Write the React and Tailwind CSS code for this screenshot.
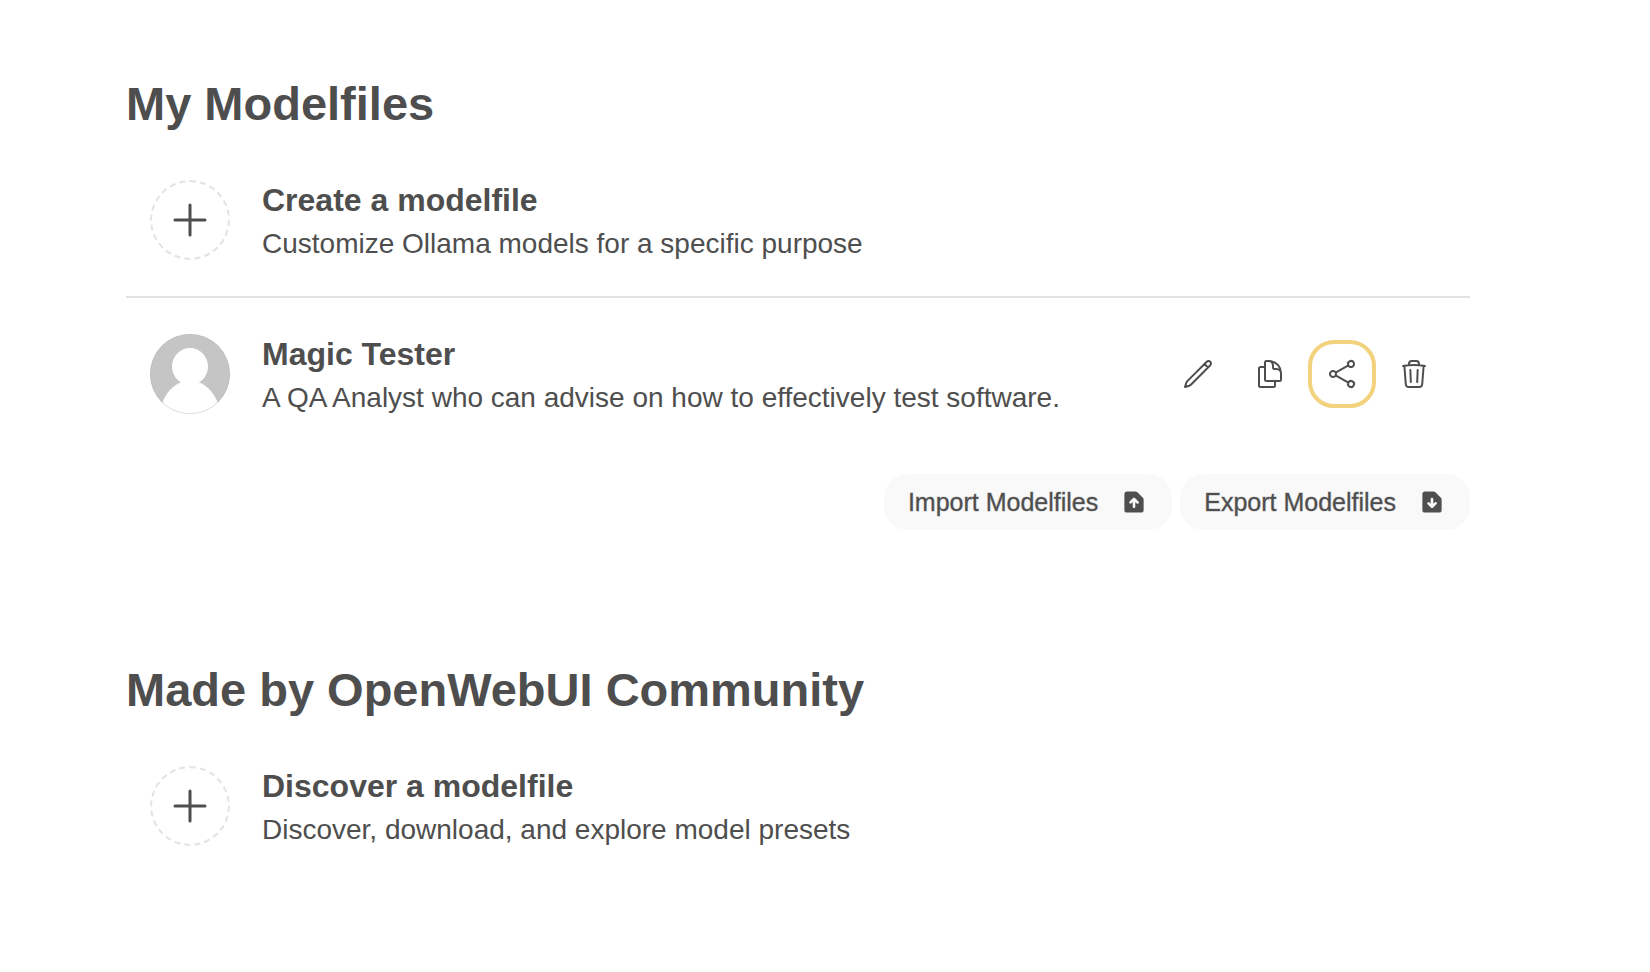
import { HiOutlinePencil, HiOutlineDocumentDuplicate, HiOutlineShare, HiOutlineTrash } from 'react-icons/hi2';

const DOC =
  'M4 2a1.5 1.5 0 0 0-1.5 1.5v9A1.5 1.5 0 0 0 4 14h8a1.5 1.5 0 0 0 1.5-1.5V6.621a1.5 1.5 0 0 0-.44-1.06L9.94 2.439A1.5 1.5 0 0 0 8.878 2H4Z';
const ARROW_UP =
  'm4 9.5a.75.75 0 0 1-.75-.75V8.06l-.72.72a.75.75 0 0 1-1.06-1.06l2-2a.75.75 0 0 1 1.06 0l2 2a.75.75 0 1 1-1.06 1.06l-.72-.72v2.69a.75.75 0 0 1-.75.75Z';
const ARROW_DOWN =
  'm4 3.5a.75.75 0 0 1 .75.75v2.69l.72-.72a.75.75 0 1 1 1.06 1.06l-2 2a.75.75 0 0 1-1.06 0l-2-2a.75.75 0 0 1 1.06-1.06l.72.72V6.25A.75.75 0 0 1 8 5.5Z';

function PlusCircle() {
  return (
    <span className="flex size-20 shrink-0 items-center justify-center rounded-full border-2 border-dashed border-[#e3e3e3]">
      <svg viewBox="0 0 24 24" fill="currentColor" className="size-12" aria-hidden="true">
        <path d="M12 3.75a.75.75 0 01.75.75v6.75h6.75a.75.75 0 010 1.5h-6.75v6.75a.75.75 0 01-1.5 0v-6.75H4.5a.75.75 0 010-1.5h6.75V4.5a.75.75 0 01.75-.75z" />
      </svg>
    </span>
  );
}

function Avatar() {
  return (
    <svg viewBox="0 0 80 80" className="size-20 shrink-0 rounded-full" aria-hidden="true">
      <rect width="80" height="80" fill="#c5c5c5" />
      <ellipse cx="40" cy="32.5" rx="18" ry="18.5" fill="#fff" />
      <path d="M9 80C12 64 20 52 32 48h16c12 4 20 16 23 32z" fill="#fff" />
      <circle cx="40" cy="40" r="39.75" fill="none" stroke="#b5b5b5" strokeWidth="0.5" />
    </svg>
  );
}

function Entry({ icon, title, text }) {
  return (
    <a href="#" className="flex min-w-0 flex-1 items-center gap-8">
      {icon}
      <span className="flex min-w-0 flex-col">
        <span className="text-[32px] leading-12 font-bold">{title}</span>
        <span className="text-[28px] leading-10">{text}</span>
      </span>
    </a>
  );
}

function IconButton({ label, icon: Icon, active }) {
  return (
    <button
      type="button"
      aria-label={label}
      className={
        active
          ? 'rounded-3xl p-4 outline-4 -outline-offset-2 outline-[#f3d27e]'
          : 'rounded-3xl p-4'
      }
    >
      <Icon className="size-8" />
    </button>
  );
}

function FileButton({ label, arrow }) {
  return (
    <button
      type="button"
      className="flex items-center gap-[22px] rounded-3xl bg-[#f9f9f9] px-6 py-3 text-[25px] leading-8 font-medium"
    >
      <span className="[-webkit-text-stroke:1px_#4e4e4e60]">{label}</span>
      <svg viewBox="0 0 16 16" fill="currentColor" className="size-7" aria-hidden="true">
        <path fillRule="evenodd" clipRule="evenodd" d={DOC + arrow} />
      </svg>
    </button>
  );
}

export default function App() {
  return (
    <div className="min-h-screen bg-white pt-18 pr-[54px] font-['Liberation_Sans',Arial,sans-serif] text-[#4e4e4e]">
      <main className="mx-auto w-full max-w-[1344px]">
        <section>
          <h1 className="text-[47px] leading-16 font-bold">My Modelfiles</h1>
          <div className="mt-8 flex px-6 py-2">
            <Entry
              icon={<PlusCircle />}
              title="Create a modelfile"
              text="Customize Ollama models for a specific purpose"
            />
          </div>
          <hr className="my-6 border-t-2 border-[#e3e3e3]" />
          <div className="flex items-center px-6 py-2">
            <Entry
              icon={<Avatar />}
              title="Magic Tester"
              text="A QA Analyst who can advise on how to effectively test software."
            />
            <div className="flex gap-2">
              <IconButton label="Edit" icon={HiOutlinePencil} />
              <IconButton label="Clone" icon={HiOutlineDocumentDuplicate} />
              <IconButton label="Share" icon={HiOutlineShare} active />
              <IconButton label="Delete" icon={HiOutlineTrash} />
            </div>
          </div>
          <div className="mt-12 flex justify-end gap-2">
            <FileButton label="Import Modelfiles" arrow={ARROW_UP} />
            <FileButton label="Export Modelfiles" arrow={ARROW_DOWN} />
          </div>
        </section>
        <section className="mt-32">
          <h2 className="text-[47px] leading-16 font-bold">Made by OpenWebUI Community</h2>
          <div className="mt-8 flex px-6 py-2">
            <Entry
              icon={<PlusCircle />}
              title="Discover a modelfile"
              text="Discover, download, and explore model presets"
            />
          </div>
        </section>
      </main>
    </div>
  );
}
